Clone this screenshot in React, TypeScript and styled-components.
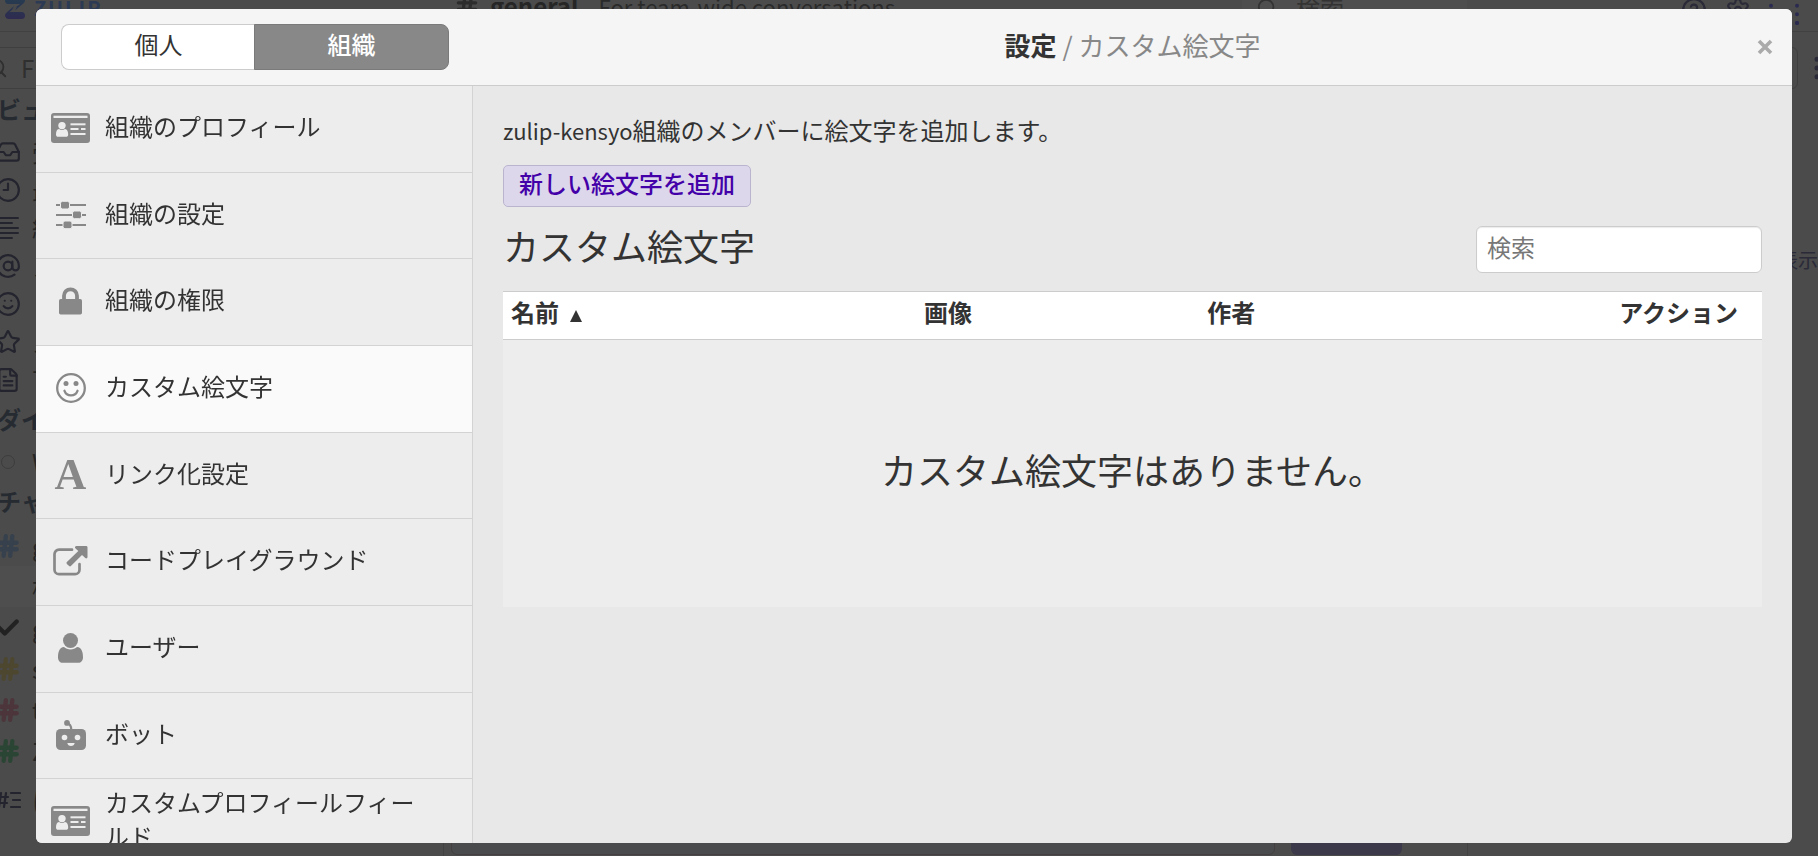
import React from "react";
import styled, { createGlobalStyle, css } from "styled-components";
import {
  Inbox,
  Clock9,
  AtSign,
  Smile,
  Star,
  FileText,
  Hash,
  Check,
  Search,
  CircleHelp,
  Settings,
  MoreVertical,
} from "lucide-react";

const GlobalStyle = createGlobalStyle`
  *, *::before, *::after { box-sizing: border-box; }
  html, body, #root { height: 100%; }
  body {
    margin: 0;
    overflow: hidden;
    background: #4b4b4b;
    color: #333;
    font-family: "Noto Sans CJK JP", "Noto Sans", sans-serif;
    font-size: 24px;
    line-height: 34px;
  }
  button, input { font: inherit; color: inherit; }
  h1, h2, p, ul { margin: 0; padding: 0; }
  ul { list-style: none; }
`;

/* ---------- dimmed application behind the dialog ---------- */

const Shell = styled.div`
  height: 100vh;
  overflow: hidden;
  display: flex;
  flex-direction: column;
  color: #2c2c2c;
`;

const TopBar = styled.header`
  flex: none;
  height: 43px;
  margin-top: -11px;
  border-bottom: 1px solid #414141;
  display: grid;
  grid-template-columns: 454px 1fr 576px;
  align-items: center;
  white-space: nowrap;
`;

const Brand = styled.div`
  display: flex;
  align-items: center;
  gap: 9px;
  padding: 0 0 4px 5px;
  font-size: 20px;
  font-weight: 700;
  letter-spacing: 2px;
  color: #2c3a54;
`;

const Stream = styled.div`
  display: flex;
  align-items: center;
  gap: 10px;
  padding-bottom: 8px;
  font-size: 24px;
`;

const StreamTitle = styled.strong`
  font-weight: 700;
  color: #262626;
`;

const StreamTopic = styled.span`
  margin-left: 10px;
  font-size: 22px;
  color: #2a2a2a;
`;

const TopTools = styled.div`
  display: flex;
  align-items: center;
  justify-content: space-between;
`;

const TopSearch = styled.div`
  width: 225px;
  height: 42px;
  padding: 0 0 4px 14px;
  background: #4e4e4e;
  display: flex;
  align-items: center;
  gap: 18px;
  color: #333;
`;

const TopIcons = styled.div`
  width: 137px;
  flex: none;
  display: flex;
  align-items: center;
  gap: 18px;
  color: #2a2a38;
  svg { flex: none; }
`;

const Avatar = styled.span`
  flex: none;
  width: 30px;
  height: 30px;
  border: 4px dotted #2b2b50;
`;

const ShellBody = styled.div`
  flex: 1;
  min-height: 0;
  display: grid;
  grid-template-columns: 444px 1fr 350px;
`;

const Side = styled.nav`
  border-right: 1px solid #424242;
  padding-top: 15px;
  overflow: hidden;
  white-space: nowrap;
`;

const SideFilter = styled.div`
  height: 42px;
  border: 1px solid #3f3f3f;
  border-left: 0;
  display: flex;
  align-items: center;
  gap: 13px;
  color: #2f2f2f;
  svg { margin-left: -14px; }
`;

const SideHeading = styled.div`
  height: 44px;
  padding-bottom: 4px;
  display: flex;
  align-items: center;
  font-weight: 700;
  color: #262a31;
  text-indent: -3px;
`;

const SideRow = styled.div<{ $tall?: boolean; $lit?: boolean; $tone?: string }>`
  height: ${(p) => (p.$tall ? 41 : 38)}px;
  display: flex;
  align-items: center;
  gap: 11px;
  background: ${(p) => (p.$lit ? "#4e4e4e" : "transparent")};
  color: #262626;
  svg {
    flex: none;
    width: 26px;
    height: 26px;
    margin-left: -5px;
    color: ${(p) => p.$tone || "#24242f"};
  }
`;

const SideFooter = styled(SideRow)`
  height: 58px;
`;

const SideGap = styled.div`
  width: 21px;
`;

const Feed = styled.main`
  display: flex;
  flex-direction: column;
  justify-content: flex-end;
  border-right: 1px solid #424242;
`;

const Compose = styled.div`
  height: 56px;
  display: flex;
  gap: 16px;
  padding: 0 65px 1px 7px;
`;

const ComposeBox = styled.div`
  flex: 1;
  border: 1px solid #443f40;
  border-radius: 6px;
  background: #4a4b4d;
`;

const ComposeSend = styled.div`
  width: 111px;
  border-radius: 6px;
  background: #3c394b;
`;

const RightSide = styled.aside`
  padding: 15px 0 0 7px;
  font-size: 20px;
  color: #2a2a38;
  overflow: hidden;
  text-align: right;
`;

const RightFilter = styled.div`
  display: flex;
  align-items: center;
  height: 42px;
  gap: 4px;
  margin-right: -14px;
`;

const RightFilterBox = styled.div`
  flex: 1;
  height: 42px;
  border: 1px solid #3f3f3f;
  border-radius: 6px;
`;

const RightLink = styled.div`
  margin-top: 154px;
`;

/* ---------- dialog ---------- */

const Overlay = styled.div`
  position: fixed;
  inset: 0;
  padding: 9px 26px 13px 36px;
  display: flex;
`;

const Dialog = styled.section`
  flex: 1;
  display: grid;
  grid-template-columns: 437px minmax(0, 1fr);
  grid-template-rows: 77px minmax(0, 1fr);
  border-radius: 6px;
  overflow: hidden;
  background: #e8e8e8;
`;

const DialogHeader = styled.header`
  grid-column: 1 / -1;
  display: grid;
  grid-template-columns: subgrid;
  align-items: center;
  background: #f5f5f5;
  border-bottom: 1px solid #ccc;
`;

const Tabs = styled.div`
  display: flex;
  margin: 0 24px 0 25px;
`;

const Tab = styled.button<{ $active?: boolean }>`
  flex: 1;
  height: 46px;
  padding: 0 0 6px;
  border: 1px solid #ccc;
  background: #fff;
  line-height: 32px;
  border-radius: 8px 0 0 8px;
  border-right: 0;
  ${(p) =>
    p.$active &&
    css`
      margin-left: -1px;
      background: #888;
      border: 1px solid #7a7a7a;
      border-radius: 0 8px 8px 0;
      color: #fff;
      font-weight: 500;
    `}
`;

const TitleBar = styled.div`
  display: grid;
  grid-template-columns: 52px 1fr 52px;
  align-items: center;
`;

const Title = styled.h1`
  grid-column: 2;
  padding-bottom: 4px;
  text-align: center;
  font-size: 26px;
  font-weight: 700;
`;

const TitleSection = styled.span`
  font-weight: 400;
  color: #888;
`;

const Close = styled.button`
  width: 50px;
  height: 50px;
  padding: 0;
  border: 0;
  background: none;
  color: #aaa;
  display: grid;
  place-items: center;
`;

const SettingsNav = styled.nav`
  overflow: hidden;
  background: #ededed;
  border-right: 1px solid #d3d3d3;
`;

const NavLink = styled.a<{ $active?: boolean }>`
  min-height: 87px;
  padding: 0 36px 2px 0;
  display: grid;
  grid-template-columns: 69px 1fr;
  align-items: center;
  border-bottom: 1px solid #d3d3d3;
  background: ${(p) => (p.$active ? "#fafafa" : "transparent")};
  color: #333;
  text-decoration: none;
  li:nth-child(3n + 2) > & {
    min-height: 86px;
  }
`;

const NavIcon = styled.span`
  display: grid;
  place-items: center;
  color: #888;
  svg { display: block; }
`;

const NavLabel = styled.span`
  padding-bottom: 4px;
`;

const SerifLetter = styled.span`
  font-family: "Liberation Serif", serif;
  font-size: 44px;
  font-weight: 700;
  line-height: 44px;
`;

const Panel = styled.main`
  padding: 27px 30px;
  overflow: hidden;
`;

const OrgName = styled.span`
  font-size: 22px;
`;

const AddButton = styled.button`
  display: block;
  height: 42px;
  margin-top: 18px;
  padding: 0 15px 7px;
  border: 1px solid #bbb4cf;
  border-radius: 5px;
  background: #ddd7eb;
  color: #4300a8;
  font-weight: 500;
  line-height: 34px;
`;

const TableHead = styled.div`
  display: flex;
  align-items: center;
  justify-content: space-between;
  margin: 18px 0;
`;

const SectionTitle = styled.h2`
  padding-bottom: 8px;
  font-size: 36px;
  font-weight: 400;
  line-height: 40px;
`;

const SearchInput = styled.input`
  width: 286px;
  height: 47px;
  padding: 0 10px 5px;
  border: 1px solid #ccc;
  border-radius: 6px;
  background: #fff;
  box-shadow: inset 0 1px 1px rgba(0, 0, 0, 0.08);
  &::placeholder { color: #777; opacity: 1; }
`;

const EmojiTable = styled.table`
  width: 100%;
  border-collapse: separate;
  border-spacing: 0;
  table-layout: fixed;
`;

const HeadCell = styled.th<{ $width?: string; $end?: boolean }>`
  width: ${(p) => p.$width || "auto"};
  height: 49px;
  padding: ${(p) => (p.$end ? "0 24px 7px 8px" : "0 8px 7px")};
  border: solid #ccc;
  border-width: 1px 0;
  background: #fff;
  text-align: ${(p) => (p.$end ? "right" : "left")};
  font-weight: 700;
`;

const SortArrow = styled.svg`
  margin-left: 11px;
`;

const EmptyCell = styled.td`
  height: 267px;
  padding: 0 0 10px;
  background: #ededed;
  text-align: center;
  font-size: 36px;
`;

/* ---------- icons ---------- */

const IdCardIcon = () => (
  <svg width="39" height="30" viewBox="0 0 39 30">
    <rect width="39" height="30" rx="3" fill="currentColor" />
    <g fill="#ededed">
      <rect x="2.5" y="2.7" width="34" height="2.3" />
      <circle cx="11" cy="12.6" r="3.7" />
      <path d="M5 21.5c0-3 .8-5.3 3-5.6a5 5 0 0 0 6 0c2.200.3 3.200 2.600 3.200 5.600 0 1.400-.9 2.300-2.200 2.300H7.200C5.900 23.800 5 22.900 5 21.500z" />
      <rect x="19.500" y="10.300" width="15" height="2" />
      <rect x="19.500" y="15" width="8" height="2" />
      <rect x="30" y="15" width="4.500" height="2" />
      <rect x="19.500" y="20" width="15" height="2" />
    </g>
  </svg>
);

const SlidersIcon = () => (
  <svg width="30" height="28" viewBox="0 0 30 28" fill="currentColor">
    <path d="M0 3h30v2H0zM0 13h30v2H0zM0 23h30v2H0z" />
    <g stroke="#ededed" strokeWidth="1">
      <rect x="4.500" y=".3" width="9" height="7.700" rx="2" />
      <rect x="16.500" y="10" width="9" height="7.700" rx="2" />
      <rect x="7" y="20" width="9" height="7.700" rx="2" />
    </g>
  </svg>
);

const LockIcon = () => (
  <svg width="23" height="28" viewBox="0 0 23 28">
    <path d="M5 13V8.800a6.500 6.500 0 0 1 13 0V13" fill="none" stroke="currentColor" strokeWidth="3.800" />
    <rect y="12" width="23" height="15.500" rx="1.700" fill="currentColor" />
  </svg>
);

const SmileIcon = () => (
  <svg width="30" height="30" viewBox="0 0 30 30">
    <circle cx="15" cy="15" r="13.800" fill="none" stroke="currentColor" strokeWidth="2.300" />
    <circle cx="10" cy="10.500" r="2.500" fill="currentColor" />
    <circle cx="20" cy="10.500" r="2.500" fill="currentColor" />
    <path d="M8.500 17.800c1.100 3 3.500 4.500 6.500 4.500s5.400-1.500 6.500-4.500" fill="none" stroke="currentColor" strokeWidth="2.300" strokeLinecap="round" />
  </svg>
);

const ExternalIcon = () => (
  <svg width="35" height="30" viewBox="0 0 35 30">
    <path d="M19 3.700H6a4.500 4.500 0 0 0-4.500 4.500v15.500A4.500 4.500 0 0 0 6 28.200h16a4.500 4.500 0 0 0 4.500-4.500v-5.500" fill="none" stroke="currentColor" strokeWidth="2.700" strokeLinecap="round" />
    <path d="M23.500 0H33c1 0 1.500.5 1.500 1.500V11c0 1.300-1.300 1.800-2.200 1L29 8.900 17.900 20.100c-.6.600-1.200.6-1.800 0l-2.200-2.200c-.6-.6-.6-1.200 0-1.800L25.300 5l-3-2.800C21.500 1.300 22.200 0 23.500 0z" fill="currentColor" />
  </svg>
);

const UserIcon = () => (
  <svg width="25" height="30" viewBox="0 0 25 30" fill="currentColor">
    <circle cx="12.500" cy="7.500" r="7.500" />
    <path d="M0 24.500c0-5.500 1.300-10 6-10.500 1.600 1.500 3.900 2.500 6.500 2.500s4.900-1 6.500-2.500c4.700.5 6 5 6 10.500 0 3-2 5.300-4.700 5.300H4.700C2 29.800 0 27.500 0 24.500z" />
  </svg>
);

const BotIcon = () => (
  <svg width="30" height="30" viewBox="0 0 30 30">
    <path d="M11 2.800c3 1.200 4.300 3.500 4.300 7" fill="none" stroke="currentColor" strokeWidth="2.200" />
    <circle cx="11" cy="2.900" r="2.900" fill="currentColor" />
    <rect y="9" width="30" height="21" rx="4.500" fill="currentColor" />
    <g fill="#ededed">
      <circle cx="8.500" cy="17.500" r="2.800" />
      <circle cx="21.500" cy="17.500" r="2.800" />
      <path d="M11.300 23h7.400c-.4 2-1.700 3-3.700 3s-3.300-1-3.700-3z" />
    </g>
  </svg>
);

const CloseIcon = () => (
  <svg width="16" height="16" viewBox="0 0 16 16">
    <path d="M2 2l12 12M14 2L2 14" stroke="currentColor" strokeWidth="3.600" />
  </svg>
);

const FeedIcon = () => (
  <svg viewBox="0 0 26 26" stroke="currentColor" strokeWidth="2" strokeLinecap="round">
    <path d="M3 3h20M3 8h14M3 13h20M3 18h20M3 23h14" />
  </svg>
);

const StatusIcon = () => (
  <svg viewBox="0 0 26 26" fill="none" stroke="currentColor" strokeWidth="1">
    <circle cx="13" cy="13" r="6.500" />
  </svg>
);

const ChannelListIcon = () => (
  <svg viewBox="0 0 26 26" stroke="currentColor" strokeWidth="2.200" strokeLinecap="round">
    <path d="M2 10h11M1 16h11M6 6L4 20M11 6L9 20M16 6h9M18 13h7M16 20h9" />
  </svg>
);

const LogoMark = () => (
  <svg width="20" height="22" viewBox="0 0 20 22">
    <defs>
      <linearGradient id="mark" x1="0" y1="0" x2="0" y2="1">
        <stop offset="0" stopColor="#263e50" />
        <stop offset="1" stopColor="#2e2b50" />
      </linearGradient>
    </defs>
    <path fill="url(#mark)" d="M3.500 0h13a3.500 3.500 0 0 1 2.400 6L10 13.500l2.500-5-8 6.500h12a3.500 3.500 0 0 1 0 7h-13a3.500 3.500 0 0 1-2.400-6L9 9 7 13l8-6H3.500a3.500 3.500 0 0 1 0-7z" />
  </svg>
);

const navItems = [
  { label: "組織のプロフィール", icon: <IdCardIcon /> },
  { label: "組織の設定", icon: <SlidersIcon /> },
  { label: "組織の権限", icon: <LockIcon /> },
  { label: "カスタム絵文字", icon: <SmileIcon />, active: true },
  { label: "リンク化設定", icon: <SerifLetter aria-hidden="true">A</SerifLetter> },
  { label: "コードプレイグラウンド", icon: <ExternalIcon /> },
  { label: "ユーザー", icon: <UserIcon /> },
  { label: "ボット", icon: <BotIcon /> },
  { label: "カスタムプロフィールフィールド", icon: <IdCardIcon /> },
];

const views = [
  { label: "受信", icon: <Inbox /> },
  { label: "最近", icon: <Clock9 /> },
  { label: "統合", icon: <FeedIcon /> },
  { label: "メン", icon: <AtSign /> },
  { label: "リア", icon: <Smile /> },
  { label: "スタ", icon: <Star /> },
  { label: "下書", icon: <FileText /> },
];

const channels = [
  { label: "g", tone: "#36414d", icon: <Hash strokeWidth={4} /> },
  { label: "検", lit: true, icon: <SideGap /> },
  { label: "g", tone: "#222", icon: <Check strokeWidth={4} /> },
  { label: "s", tone: "#4e4730", icon: <Hash strokeWidth={4} /> },
  { label: "t", tone: "#4c353b", icon: <Hash strokeWidth={4} /> },
  { label: "Z", tone: "#2b4534", icon: <Hash strokeWidth={4} /> },
];

const Backdrop = () => (
  <Shell aria-hidden="true">
    <TopBar>
      <Brand>
        <LogoMark />
        ZULIP
      </Brand>
      <Stream>
        <Hash size={26} strokeWidth={3} />
        <StreamTitle>general</StreamTitle>
        <StreamTopic>For team-wide conversations</StreamTopic>
      </Stream>
      <TopTools>
        <TopSearch>
          <Search size={22} />
          検索
        </TopSearch>
        <TopIcons>
          <CircleHelp size={26} />
          <Settings size={26} />
          <Avatar />
          <MoreVertical size={26} />
        </TopIcons>
      </TopTools>
    </TopBar>
    <ShellBody>
      <Side>
        <SideFilter>
          <Search size={22} />
          Fi
        </SideFilter>
        <SideHeading>ビュー</SideHeading>
        {views.map((v) => (
          <SideRow key={v.label}>
            {v.icon}
            {v.label}
          </SideRow>
        ))}
        <SideHeading>ダイ</SideHeading>
        <SideRow $tone="#3d3d3d">
          <StatusIcon />W
        </SideRow>
        <SideHeading>チャ</SideHeading>
        {channels.map((c, i) => (
          <SideRow key={i} $tall $lit={c.lit} $tone={c.tone}>
            {c.icon}
            {c.label}
          </SideRow>
        ))}
        <SideFooter>
          <ChannelListIcon />
          ほ
        </SideFooter>
      </Side>
      <Feed>
        <Compose>
          <ComposeBox />
          <ComposeSend />
        </Compose>
      </Feed>
      <RightSide>
        <RightFilter>
          <RightFilterBox />
          <MoreVertical size={30} />
        </RightFilter>
        <RightLink>表示</RightLink>
      </RightSide>
    </ShellBody>
  </Shell>
);

export default function App() {
  return (
    <>
      <GlobalStyle />
      <Backdrop />
      <Overlay>
        <Dialog role="dialog" aria-labelledby="settings-title">
          <DialogHeader>
            <Tabs>
              <Tab type="button">個人</Tab>
              <Tab type="button" $active>
                組織
              </Tab>
            </Tabs>
            <TitleBar>
              <Title id="settings-title">
                設定<TitleSection> / カスタム絵文字</TitleSection>
              </Title>
              <Close type="button" aria-label="閉じる">
                <CloseIcon />
              </Close>
            </TitleBar>
          </DialogHeader>
          <SettingsNav>
            <ul>
              {navItems.map((item) => (
                <li key={item.label}>
                  <NavLink href="#" $active={item.active}>
                    <NavIcon>{item.icon}</NavIcon>
                    <NavLabel>{item.label}</NavLabel>
                  </NavLink>
                </li>
              ))}
            </ul>
          </SettingsNav>
          <Panel>
            <p>
              <OrgName>zulip-kensyo</OrgName>組織のメンバーに絵文字を追加します。
            </p>
            <AddButton type="button">新しい絵文字を追加</AddButton>
            <TableHead>
              <SectionTitle>カスタム絵文字</SectionTitle>
              <SearchInput type="text" placeholder="検索" aria-label="検索" />
            </TableHead>
            <EmojiTable>
              <thead>
                <tr>
                  <HeadCell $width="32.8%">
                    名前
                    <SortArrow width="12" height="12" viewBox="0 0 12 12">
                      <path d="M6 0l6 12H0z" fill="currentColor" />
                    </SortArrow>
                  </HeadCell>
                  <HeadCell $width="22.5%">画像</HeadCell>
                  <HeadCell>作者</HeadCell>
                  <HeadCell $end>アクション</HeadCell>
                </tr>
              </thead>
              <tbody>
                <tr>
                  <EmptyCell colSpan={4}>カスタム絵文字はありません。</EmptyCell>
                </tr>
              </tbody>
            </EmojiTable>
          </Panel>
        </Dialog>
      </Overlay>
    </>
  );
}
